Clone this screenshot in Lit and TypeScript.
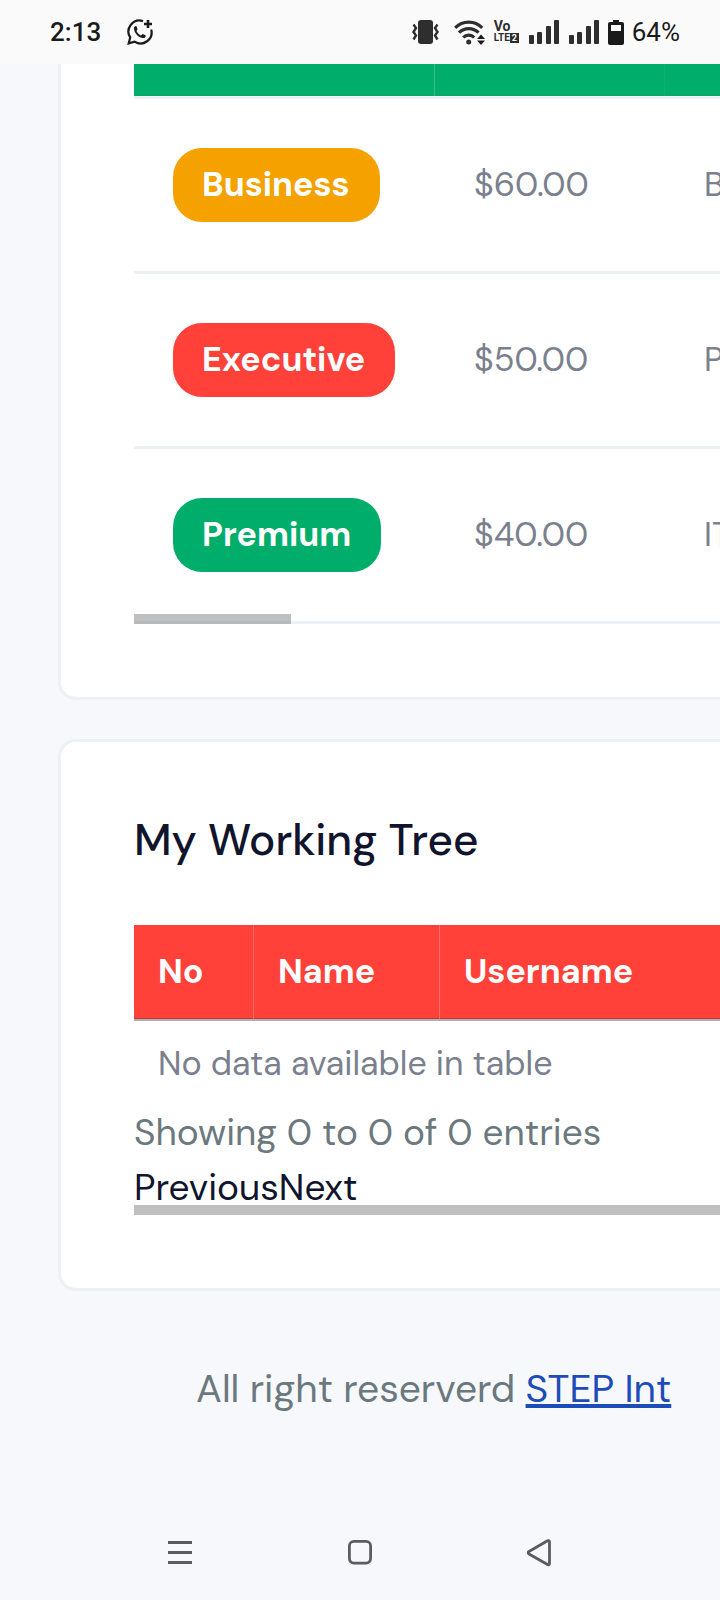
import { LitElement, html, css, svg } from "lit";
import { customElement } from "lit/decorators.js";

const plans = [
  { name: "Business", tone: "amber", price: "$60.00", field: "B" },
  { name: "Executive", tone: "red", price: "$50.00", field: "P" },
  { name: "Premium", tone: "green", price: "$40.00", field: "IT" },
];

const signal = (x: number) => svg`
  <g transform="translate(${x} 0)" fill="#2e2e2e">
    <rect x="0" y="15" width="5" height="9" rx="1"/>
    <rect x="8" y="12" width="5" height="12" rx="1"/>
    <rect x="17" y="6" width="5" height="18" rx="1"/>
    <rect x="25" y="0" width="5" height="24" rx="1"/>
  </g>`;

@customElement("status-bar")
export class StatusBar extends LitElement {
  static styles = css`
    :host {
      display: flex;
      align-items: center;
      height: 64px;
      padding: 0 40px 0 50px;
      box-sizing: border-box;
      background: #fafafa;
      color: #1a1a1a;
      font: 500 26px/32px Roboto, sans-serif;
    }
    svg { display: block; flex: none; }
    .chat { margin-left: 26px; }
    .right { display: flex; align-items: center; margin-left: auto; }
    .vibrate { margin-right: 15px; }
    .wifi { margin-right: 9px; }
    .lte {
      display: grid;
      font: 700 14px/12px Roboto, sans-serif;
      color: #2e2e2e;
      width: 26px;
      margin-right: 9px;
    }
    .lte-row { display: flex; align-items: center; font-size: 10px; }
    .sim {
      background: #2e2e2e;
      color: #fafafa;
      font-size: 9px;
      line-height: 10px;
      padding: 0 2px;
    }
    .battery { margin: 0 8px; }
    .level { font-weight: 400; }
  `;
  render() {
    return html`
      <span>2:13</span>
      <svg class="chat" width="26" height="26" viewBox="0 0 26 26" fill="none" stroke="#1a1a1a" stroke-width="2.2">
        <path d="M16 2.1A11 11 0 0 0 3.2 18.4L1.7 24.3L7.6 22.6A11 11 0 0 0 24.2 10.5"/>
        <path d="M21 1v8M17 5h8" stroke-width="2.600"/>
        <path d="M7 8.500c1-2 2.500-2 3 0l.5 1.800-1 1.700c1 2 2.500 3.500 4.500 4.500l1.700-1.500 2.800 1.200c.8 2-1 3-3 2.800C11 18.500 6.500 13 7 8.500Z" fill="#1a1a1a" stroke="none"/>
      </svg>
      <div class="right">
        <svg class="vibrate" width="27" height="24" viewBox="0 0 27 24" fill="none" stroke="#2e2e2e" stroke-width="2.400">
          <rect x="6" y="0" width="15" height="24" rx="3" fill="#2e2e2e" stroke="none"/>
          <path d="M1.500 4.500l2.500 3.500-2.500 4 2.500 3.500-2.500 4M25.500 4.500L23 8l2.500 4-2.500 3.500 2.500 4"/>
        </svg>
        <svg class="wifi" width="31" height="25" viewBox="0 0 31 25" fill="none" stroke="#2e2e2e" stroke-width="3.200">
          <path d="M1.200 7.800a19 19 0 0 1 27 0M5 12.700a13.500 13.500 0 0 1 19.500 0M9.200 17.500a7.500 7.500 0 0 1 11 0"/>
          <circle cx="14.700" cy="22" r="2.500" fill="#2e2e2e" stroke="none"/>
          <path d="M27 14.500l4 4.500h-8zM27 25l4-4.500h-8z" fill="#1a1a1a" stroke="none"/>
        </svg>
        <div class="lte">
          <span>Vo</span>
          <span class="lte-row">LTE<span class="sim">2</span></span>
        </div>
        <svg width="71" height="24" viewBox="0 0 71 24">${signal(0)}${signal(40)}</svg>
        <svg class="battery" width="16" height="25" viewBox="0 0 16 25">
          <path d="M5 0h6v2h3a2 2 0 0 1 2 2v19a2 2 0 0 1-2 2H2a2 2 0 0 1-2-2V4a2 2 0 0 1 2-2h3z" fill="#1a1a1a"/>
          <rect x="3" y="5" width="10" height="6" fill="#fafafa"/>
        </svg>
        <span class="level">64%</span>
      </div>
    `;
  }
}

@customElement("system-nav")
export class SystemNav extends LitElement {
  static styles = css`
    :host {
      display: grid;
      grid-template-columns: repeat(3, 1fr);
      height: 94px;
      padding: 0 90px;
    }
    button {
      display: grid;
      place-items: center;
      border: 0;
      padding: 0;
      background: none;
    }
  `;
  render() {
    return html`
      <button aria-label="Recent apps">
        <svg width="26" height="28" viewBox="0 0 26 28" stroke="#5c5c5c" stroke-width="3">
          <path d="M1 3.500h24M1 13.500h24M1 23.500h24"/>
        </svg>
      </button>
      <button aria-label="Home">
        <svg width="26" height="28" viewBox="0 0 26 28" fill="none" stroke="#5c5c5c" stroke-width="2.800">
          <rect x="2.400" y="2.400" width="21.200" height="21.700" rx="4.500"/>
        </svg>
      </button>
      <button aria-label="Back">
        <svg width="26" height="28" viewBox="0 0 26 28" fill="none" stroke="#5c5c5c" stroke-width="2.800" stroke-linejoin="round">
          <path d="M2 12.500L20.500 1.800Q22.500 1 22.500 3v21.500q0 2-2 1L2 15q-2-1.200 0-2.500Z"/>
        </svg>
      </button>
    `;
  }
}

@customElement("app-root")
export class AppRoot extends LitElement {
  static styles = css`
    :host {
      display: flex;
      flex-direction: column;
      min-height: 100vh;
      overflow: hidden;
      background: #f6f8fc;
      color: #6b787e;
      font-family: "DM Sans", Inter, sans-serif;
    }
    main {
      display: grid;
      grid-template-columns: minmax(0, 1fr);
      gap: 39px;
      padding-left: 58px;
    }
    .card {
      background: #fff;
      border: 3px solid #edf0f4;
      border-right: 0;
      border-radius: 18px 0 0 18px;
      padding: 71px 0 73px 73px;
    }
    .plans { border-top: 0; border-top-left-radius: 0; padding-top: 0; }
    .scroller { position: relative; overflow: hidden; }
    .thumb { position: absolute; left: 0; bottom: 0; height: 10px; background: rgba(128, 128, 128, 0.5); }
    .short { width: 157px; }
    .full { width: 100%; }
    table { border-collapse: separate; border-spacing: 0; table-layout: fixed; width: 100%; }
    th, td { text-align: left; font-size: 34px; line-height: 44px; white-space: nowrap; overflow: hidden; box-sizing: border-box; }
    th { color: #fff; font-weight: 700; border-right: 1px solid rgba(255, 255, 255, 0.2); }
    td { color: #7a808d; }
    .plans th { height: 32px; padding: 0; background: #00ad6b; box-shadow: inset 0 -1px #0aa568; }
    .plans th:nth-child(2) { border-right-color: rgba(255, 255, 255, 0.05); }
    .plans td { height: 175px; padding: 0 0 0 39px; border-bottom: 3px solid #edf0f4; }
    .plans tbody tr:first-child td { height: 178px; border-top: 3px solid #edf0f4; }
    .w-plan { width: 301px; }
    .w-price { width: 230px; }
    .w-no { width: 120px; }
    .w-name { width: 186px; }
    .badge {
      display: inline-block;
      border-radius: 29px;
      padding: 15px 30px 15px 29px;
      color: #fff;
      font-size: 34px;
      font-weight: 700;
      line-height: 44px;
    }
    .amber { background: #f5a100; }
    .red { background: #ff413a; }
    .green { background: #00ad6b; }
    h2 { margin: 0 0 58px; color: #10142d; font-size: 44px; font-weight: 500; line-height: 54px; }
    .tree th { height: 96px; padding: 0 0 0 24px; background: #ff413a; background-clip: padding-box; border-right-color: #ff6f6a; border-bottom: 2px solid #b0b0b0; box-shadow: inset 0 -1px #b93a36; }
    th:last-child, .tree th:last-child { border-right: 0; }
    .tree td { height: 84px; padding: 2px 24px 0; }
    .info { font-size: 37px; line-height: 54px; }
    .pager { display: flex; }
    .pager a { color: #10142d; text-decoration: none; font-size: 37px; line-height: 56px; }
    footer { padding: 68px 50px 0 196px; font-size: 39px; line-height: 60px; white-space: nowrap; }
    footer a { color: #1c4cb8; text-decoration-thickness: 4px; }
    system-nav { margin-top: auto; }
  `;
  render() {
    return html`
      <status-bar></status-bar>
      <main>
        <section class="card plans">
          <div class="scroller">
            <table>
              <colgroup><col class="w-plan" /><col class="w-price" /><col /></colgroup>
              <thead><tr><th></th><th></th><th></th></tr></thead>
              <tbody>
                ${plans.map((p) => html`
                  <tr>
                    <td><span class="badge ${p.tone}">${p.name}</span></td>
                    <td>${p.price}</td>
                    <td>${p.field}</td>
                  </tr>`)}
              </tbody>
            </table>
            <div class="thumb short"></div>
          </div>
        </section>
        <section class="card tree">
          <h2>My Working Tree</h2>
          <div class="scroller">
            <table>
              <colgroup><col class="w-no" /><col class="w-name" /><col /></colgroup>
              <thead><tr><th>No</th><th>Name</th><th>Username</th></tr></thead>
              <tbody><tr><td colspan="3">No data available in table</td></tr></tbody>
            </table>
            <div class="info">Showing 0 to 0 of 0 entries</div>
            <div class="pager"><a href="#">Previous</a><a href="#">Next</a></div>
            <div class="thumb full"></div>
          </div>
        </section>
      </main>
      <footer>All right reserverd <a href="#">STEP Int</a></footer>
      <system-nav></system-nav>
    `;
  }
}
